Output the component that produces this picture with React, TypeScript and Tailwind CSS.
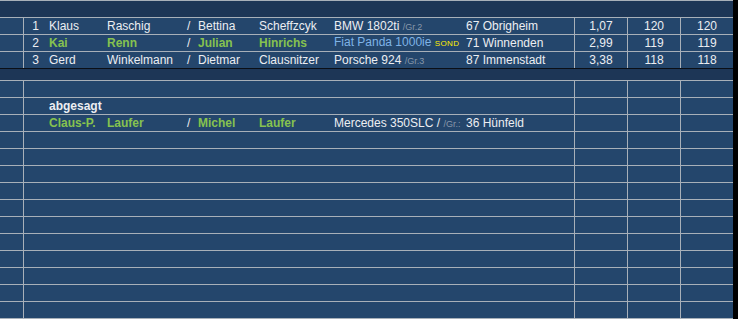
import React from "react";

type Entry = {
    nr?: string
    first1: string
    last1: string
    first2: string
    last2: string
    car: string
    carClass?: string
    tag?: string
    tagKind?: "gr" | "sond"
    city: string
    a?: string
    b?: string
    c?: string
    green?: boolean
}

const RESULTS: Entry[] = [
    { nr: "1", first1: "Klaus", last1: "Raschig", first2: "Bettina", last2: "Scheffzcyk", car: "BMW 1802ti", tag: "/Gr.2", tagKind: "gr", city: "67 Obrigheim", a: "1,07", b: "120", c: "120" },
    { nr: "2", first1: "Kai", last1: "Renn", first2: "Julian", last2: "Hinrichs", car: "Fiat Panda 1000ie", carClass: "text-[#7fb3e6]", tag: "SOND", tagKind: "sond", city: "71 Winnenden", a: "2,99", b: "119", c: "119", green: true },
    { nr: "3", first1: "Gerd", last1: "Winkelmann", first2: "Dietmar", last2: "Clausnitzer", car: "Porsche 924", tag: "/Gr.3", tagKind: "gr", city: "87 Immenstadt", a: "3,38", b: "118", c: "118" },
]

const CANCELLED: Entry = { first1: "Claus-P.", last1: "Laufer", first2: "Michel", last2: "Laufer", car: "Mercedes 350SLC /", tag: "/Gr.:", tagKind: "gr", city: "36 Hünfeld", green: true }

function EntryText(e: Entry) {
    const name = e.green ? "font-bold text-[#86c24f]" : ""
    return (
        <div className="flex items-center h-full">
            <span className="w-[25px] text-right pr-[10px]">{e.nr}</span>
            <span className={"w-[58px] " + name}>{e.first1}</span>
            <span className={"w-[80px] " + name}>{e.last1}</span>
            <span className="w-[11px]">/</span>
            <span className={"w-[61px] " + name}>{e.first2}</span>
            <span className={"w-[75px] " + name}>{e.last2}</span>
            <span className={"w-[132px] whitespace-nowrap " + (e.carClass ?? "")}>
                {e.car}{" "}
                {e.tagKind === "sond"
                    ? <span className="text-[8px] text-[#fff000] tracking-[0.4px]">{e.tag}</span>
                    : <span className="text-[9px] text-[#8898ab]">{e.tag}</span>}
            </span>
            <span className="whitespace-nowrap">{e.city}</span>
        </div>
    )
}

function Row({ children, a, b, c }: { children?: React.ReactNode, a?: string, b?: string, c?: string }) {
    return (
        <div className="flex h-[17px] border-t border-[#a8b0b9] bg-[#24466c]">
            <div className="w-[23px]" />
            <div className="w-[551px] border-l border-[#a8b0b9]">{children}</div>
            <div className="w-[53px] border-l border-[#a8b0b9] text-center">{a}</div>
            <div className="w-[53px] border-l border-[#a8b0b9] text-center">{b}</div>
            <div className="w-[53px] border-l border-[#a8b0b9] text-center">{c}</div>
        </div>
    )
}

export default function App() {
    const empty = Array.from({ length: 11 })
    return (
        <div className="w-[738px] h-[319px] bg-black overflow-hidden font-['Liberation_Sans',Arial,sans-serif] text-[12px] leading-[16px] text-[#eceef2]">
            <div className="w-[733px]">
                <div className="h-[17px] border-t border-[#a8b0b9] bg-[#1d3656]" />
                {RESULTS.map((r, i) => (
                    <Row key={i} a={r.a} b={r.b} c={r.c}>{EntryText(r)}</Row>
                ))}
                <div className="h-[12px] border-t border-[#0b0f16] bg-[#1d3656]" />
                <Row />
                <Row>
                    <div className="flex items-center h-full pl-[25px] font-bold">abgesagt</div>
                </Row>
                <Row>{EntryText(CANCELLED)}</Row>
                {empty.map((_, i) => <Row key={i} />)}
                <div className="h-px bg-[#a8b0b9]" />
            </div>
        </div>
    )
}
